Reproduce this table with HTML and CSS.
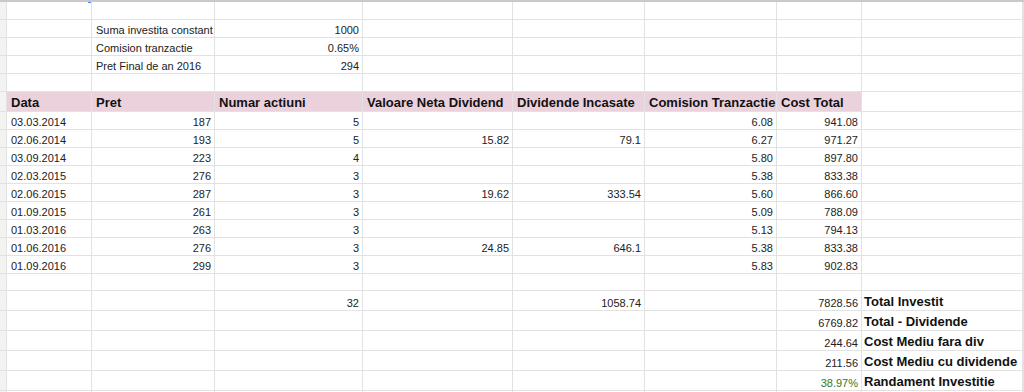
FILE: index.html
```html
<!DOCTYPE html>
<html lang="ro">
<head>
<meta charset="utf-8">
<title>Sheet</title>
<link rel="stylesheet" href="styles.css">
</head>
<body>
<div class="sheet">
  <div class="grid">
    <!-- row 1 -->
    <div class="rh"></div><div class="c"></div><div class="c"></div><div class="c"></div><div class="c"></div><div class="c"></div><div class="c"></div><div class="c"></div><div class="c"></div>
    <!-- row 2 -->
    <div class="rh"></div><div class="c"></div><div class="c">Suma investita constant</div><div class="c r">1000</div><div class="c"></div><div class="c"></div><div class="c"></div><div class="c"></div><div class="c"></div>
    <!-- row 3 -->
    <div class="rh"></div><div class="c"></div><div class="c">Comision tranzactie</div><div class="c r">0.65%</div><div class="c"></div><div class="c"></div><div class="c"></div><div class="c"></div><div class="c"></div>
    <!-- row 4 -->
    <div class="rh"></div><div class="c"></div><div class="c">Pret Final de an 2016</div><div class="c r">294</div><div class="c"></div><div class="c"></div><div class="c"></div><div class="c"></div><div class="c"></div>
    <!-- row 5 -->
    <div class="rh"></div><div class="c"></div><div class="c"></div><div class="c"></div><div class="c"></div><div class="c"></div><div class="c"></div><div class="c"></div><div class="c"></div>
    <!-- header -->
    <div class="rh"></div><div class="c h">Data</div><div class="c h">Pret</div><div class="c h">Numar actiuni</div><div class="c h">Valoare Neta Dividend</div><div class="c h">Dividende Incasate</div><div class="c h">Comision Tranzactie</div><div class="c h">Cost Total</div><div class="c"></div>
    <!-- data -->
    <div class="rh"></div><div class="c">03.03.2014</div><div class="c r">187</div><div class="c r">5</div><div class="c"></div><div class="c"></div><div class="c r">6.08</div><div class="c r">941.08</div><div class="c"></div>
    <div class="rh"></div><div class="c">02.06.2014</div><div class="c r">193</div><div class="c r">5</div><div class="c r">15.82</div><div class="c r">79.1</div><div class="c r">6.27</div><div class="c r">971.27</div><div class="c"></div>
    <div class="rh"></div><div class="c">03.09.2014</div><div class="c r">223</div><div class="c r">4</div><div class="c"></div><div class="c"></div><div class="c r">5.80</div><div class="c r">897.80</div><div class="c"></div>
    <div class="rh"></div><div class="c">02.03.2015</div><div class="c r">276</div><div class="c r">3</div><div class="c"></div><div class="c"></div><div class="c r">5.38</div><div class="c r">833.38</div><div class="c"></div>
    <div class="rh"></div><div class="c">02.06.2015</div><div class="c r">287</div><div class="c r">3</div><div class="c r">19.62</div><div class="c r">333.54</div><div class="c r">5.60</div><div class="c r">866.60</div><div class="c"></div>
    <div class="rh"></div><div class="c">01.09.2015</div><div class="c r">261</div><div class="c r">3</div><div class="c"></div><div class="c"></div><div class="c r">5.09</div><div class="c r">788.09</div><div class="c"></div>
    <div class="rh"></div><div class="c">01.03.2016</div><div class="c r">263</div><div class="c r">3</div><div class="c"></div><div class="c"></div><div class="c r">5.13</div><div class="c r">794.13</div><div class="c"></div>
    <div class="rh"></div><div class="c">01.06.2016</div><div class="c r">276</div><div class="c r">3</div><div class="c r">24.85</div><div class="c r">646.1</div><div class="c r">5.38</div><div class="c r">833.38</div><div class="c"></div>
    <div class="rh"></div><div class="c">01.09.2016</div><div class="c r">299</div><div class="c r">3</div><div class="c"></div><div class="c"></div><div class="c r">5.83</div><div class="c r">902.83</div><div class="c"></div>
    <!-- empty -->
    <div class="rh"></div><div class="c"></div><div class="c"></div><div class="c"></div><div class="c"></div><div class="c"></div><div class="c"></div><div class="c"></div><div class="c"></div>
    <!-- totals -->
    <div class="rh"></div><div class="c"></div><div class="c"></div><div class="c r">32</div><div class="c"></div><div class="c r">1058.74</div><div class="c"></div><div class="c r">7828.56</div><div class="c b">Total Investit</div>
    <div class="rh"></div><div class="c"></div><div class="c"></div><div class="c"></div><div class="c"></div><div class="c"></div><div class="c"></div><div class="c r">6769.82</div><div class="c b">Total - Dividende</div>
    <div class="rh"></div><div class="c"></div><div class="c"></div><div class="c"></div><div class="c"></div><div class="c"></div><div class="c"></div><div class="c r">244.64</div><div class="c b">Cost Mediu fara div</div>
    <div class="rh"></div><div class="c"></div><div class="c"></div><div class="c"></div><div class="c"></div><div class="c"></div><div class="c"></div><div class="c r">211.56</div><div class="c b">Cost Mediu cu dividende</div>
    <div class="rh"></div><div class="c"></div><div class="c"></div><div class="c"></div><div class="c"></div><div class="c"></div><div class="c"></div><div class="c r green">38.97%</div><div class="c b">Randament Investitie</div>
    <!-- partial last row -->
    <div class="rh"></div><div class="c"></div><div class="c"></div><div class="c"></div><div class="c"></div><div class="c"></div><div class="c"></div><div class="c"></div><div class="c"></div>
  </div>
  <div class="handle"></div>
</div>
</body>
</html>
```

FILE: styles.css
```css
* { box-sizing: border-box; }

html, body {
  margin: 0;
  padding: 0;
  background: #ffffff;
  overflow: hidden;
}

body {
  width: 1024px;
  height: 392px;
  font-family: "Liberation Sans", Arial, sans-serif;
  color: #222222;
}

.sheet {
  position: relative;
  width: 1024px;
  height: 392px;
  overflow: hidden;
  border-top: 2px solid #c9c9c9;
}

.grid {
  display: grid;
  grid-template-columns: 6px 84px 122px 147px 149px 131px 131px 84px 160px;
  grid-template-rows: repeat(5, 17px) 19px repeat(9, 17px) 16px repeat(5, 19px) 17px;
  column-gap: 1px;
  row-gap: 1px;
  background: #e2e2e2;
  padding-right: 2px;
  width: 1024px;
}

.rh {
  background: #f3f3f3;
}

.c {
  background: #ffffff;
  display: flex;
  align-items: flex-end;
  padding: 0 3px 0 4px;
  font-size: 11px;
  line-height: 13px;
  white-space: nowrap;
  overflow: hidden;
}

.r {
  justify-content: flex-end;
}

.h {
  background: #ead1dc;
  font-weight: bold;
  font-size: 13px;
  line-height: 15px;
  padding-bottom: 1px;
  color: #111111;
}

.b {
  font-weight: bold;
  font-size: 13px;
  line-height: 15px;
  padding-bottom: 1px;
  padding-left: 2px;
  color: #111111;
}

.green {
  color: #38761d;
}

.handle {
  position: absolute;
  left: 88px;
  top: -2px;
  width: 3px;
  height: 3px;
  background: #4285f4;
}
```
